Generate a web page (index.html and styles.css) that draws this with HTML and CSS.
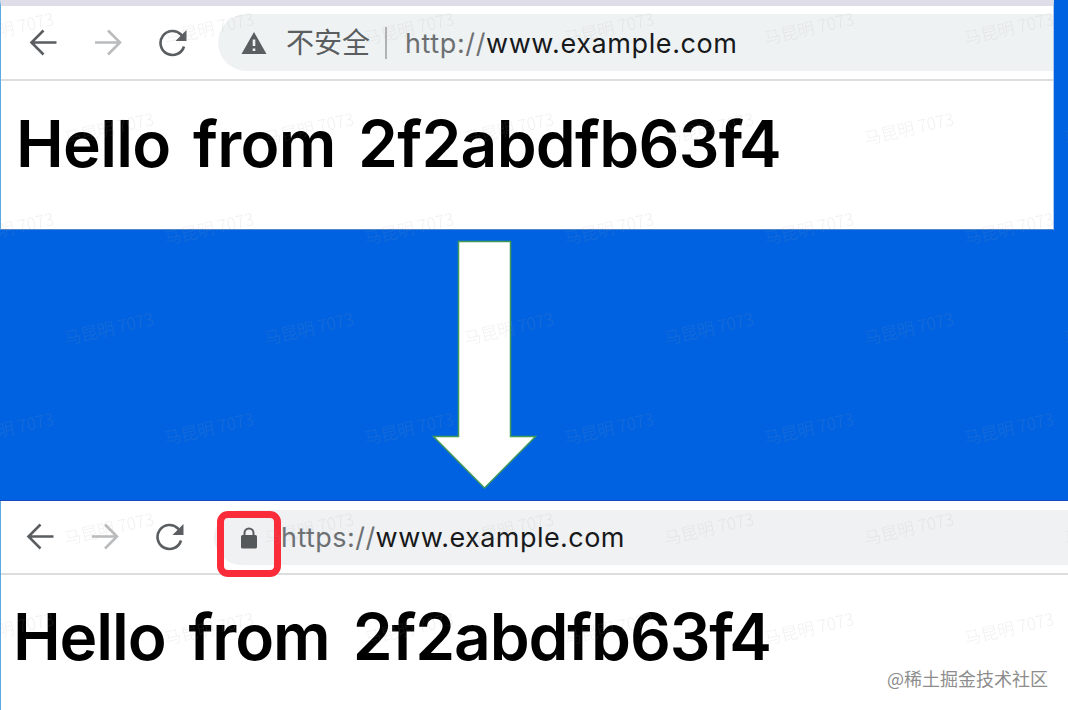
FILE: index.html
```
<!DOCTYPE html>
<html lang="zh">

<head>
    <meta charset="utf-8">
    <title>HTTP to HTTPS</title>
    <link rel="stylesheet" href="styles.css">
</head>

<body>
    <div class="browser browserHttp">
        <div class="toolbar">
            <svg class="icon back" viewBox="0 0 28 28">
                <path d="M27.500 13.500H3M14.500 1.500L2.500 13.500L14.500 25.500" />
            </svg>
            <svg class="icon forward" viewBox="0 0 28 28">
                <path d="M1 13.500H25.500M14 1.500L26 13.500L14 25.500" />
            </svg>
            <svg class="icon reload" viewBox="0 0 28 28">
                <path d="M25 17.500A12 12 0 1 1 22 5.500L24 8" />
                <path class="solid" d="M27.500 1V12H16.500Z" />
            </svg>
            <div class="address">
                <svg class="warning" viewBox="0 0 26 22">
                    <path fill="#5a5e60" d="M13 0L25.500 22H.5Z" />
                    <path stroke="#eff2f3" stroke-width="2.600" d="M13 7.500V14M13 16.500V19" />
                </svg>
                <span class="insecure">不安全</span>
                <span class="divider"></span>
                <span class="url"><span class="scheme">http://</span>www.example.com</span>
            </div>
        </div>
        <h1>Hello from 2f2abdfb63f4</h1>
    </div>

    <div class="gap">
        <svg class="arrow" width="106" height="252" viewBox="0 0 106 252">
            <path d="M27.500 1.500H79.500V196.500H104.500L53.500 248L2.500 196.500H27.500Z" />
        </svg>
    </div>

    <div class="browser browserHttps">
        <div class="toolbar">
            <svg class="icon back" viewBox="0 0 28 28">
                <path d="M27.500 13.500H3M14.500 1.500L2.500 13.500L14.500 25.500" />
            </svg>
            <svg class="icon forward" viewBox="0 0 28 28">
                <path d="M1 13.500H25.500M14 1.500L26 13.500L14 25.500" />
            </svg>
            <svg class="icon reload" viewBox="0 0 28 28">
                <path d="M25 17.500A12 12 0 1 1 22 5.500L24 8" />
                <path class="solid" d="M27.500 1V12H16.500Z" />
            </svg>
            <div class="address">
                <div class="lockBox">
                    <svg width="18" height="22" viewBox="0 0 18 22">
                        <path fill="none" stroke="#5a5e60" stroke-width="2" d="M4.500 9V6A4.500 4.500 0 0 1 13.500 6V9" />
                        <rect fill="#54585b" x="1" y="8" width="16" height="13.500" rx="1.500" />
                    </svg>
                </div>
                <span class="url"><span class="scheme">https://</span>www.example.com</span>
            </div>
        </div>
        <h1>Hello from 2f2abdfb63f4</h1>
        <div class="credit">@稀土掘金技术社区</div>
    </div>

    <!-- repeated watermark over the whole page -->
    <svg class="watermark" width="1068" height="710">
        <defs>
            <pattern id="mark" x="-140" y="-20" width="200" height="200" patternUnits="userSpaceOnUse">
                <text transform="translate(149 49) rotate(-13)" y="6">马昆明 7073</text>
                <text transform="translate(49 149) rotate(-13)" y="6">马昆明 7073</text>
            </pattern>
        </defs>
        <rect width="1068" height="710" fill="url(#mark)" />
    </svg>
</body>

</html>
```

FILE: styles.css
```
* {
    box-sizing: border-box;
}

body {
    margin: 0;
    width: 1068px;
    height: 710px;
    overflow: hidden;
    position: relative;
    background-color: #0062e1;
    font-family: Inter, "Noto Sans CJK SC", sans-serif;
}

.browser {
    background-color: white;
    border-left: 1px solid #5aa9e0;
}

.browserHttp {
    width: 1054px;
    height: 230px;
    border-top: 6px solid #dedde8;
    border-right: 1px solid #a9c8f0;
    border-bottom: 1px solid #4f86cc;
}

.browserHttps {
    height: 209px;
}

.toolbar {
    display: flex;
    align-items: center;
    height: 75px;
    padding-left: 28px;
    border-bottom: 2px solid #dcdddd;
}

.browserHttps .toolbar {
    height: 74px;
    padding-left: 25px;
}

.icon {
    width: 28px;
    height: 28px;
    margin-right: 37px;
    flex: none;
    fill: none;
    stroke: #5a5e60;
    stroke-width: 2.6;
}

.forward {
    stroke: #b9bbbc;
}

.reload {
    margin-right: 31px;
}

.browserHttps .reload {
    margin-right: 30px;
}

.reload .solid {
    fill: #5a5e60;
    stroke: none;
}

.address {
    flex: 1;
    display: flex;
    align-items: center;
    height: 57px;
    padding-left: 23px;
    background-color: #eff2f3;
    border-radius: 29px 0 0 29px;
}

.browserHttps .address {
    height: 55px;
    padding-left: 3px;
    background-color: #f0f1f3;
}

.warning {
    width: 26px;
    height: 22px;
    margin-right: 19px;
}

.insecure {
    font-family: "Noto Sans CJK SC", sans-serif;
    font-size: 28px;
    line-height: 40px;
    margin-top: -3px;
    color: #5a5e60;
}

.divider {
    width: 2px;
    height: 32px;
    margin: 0 18px 0 15px;
    background-color: #b0b3b4;
}

.url {
    margin-top: 2px;
    font-size: 27px;
    line-height: 40px;
    letter-spacing: 0.6px;
    white-space: nowrap;
    color: #17191b;
}

.browserHttps .url {
    letter-spacing: 0.45px;
}

.scheme {
    color: #6d7072;
}

/* red highlight, hangs a little below the address bar */
.lockBox {
    display: flex;
    justify-content: center;
    align-self: flex-start;
    width: 64px;
    height: 66px;
    margin-top: 1px;
    padding-top: 9px;
    flex: none;
    border: 7px solid #fb2c3a;
    border-radius: 11px;
}

h1 {
    margin: 23px 0 0 15px;
    font-size: 64px;
    line-height: 80px;
    font-weight: 600;
    letter-spacing: -0.7px;
    word-spacing: 7px;
    white-space: nowrap;
    color: black;
}

.browserHttps h1 {
    margin: 22px 0 0 12px;
    letter-spacing: -1.1px;
    word-spacing: 8px;
}

.gap {
    height: 271px;
    padding: 10px 0 0 431px;
    border-bottom: 1px solid #1748bd;
}

.arrow {
    display: block;
}

.arrow path {
    fill: white;
    stroke: #429a58;
    stroke-width: 1.5;
}

.credit {
    padding-right: 20px;
    margin-top: -13px;
    text-align: right;
    font-family: "Noto Sans CJK SC", sans-serif;
    font-size: 18px;
    line-height: 28px;
    color: #8d8d8d;
}

.watermark {
    position: absolute;
    left: 0;
    top: 0;
    pointer-events: none;
}

.watermark text {
    font-family: "Noto Sans CJK SC", sans-serif;
    font-size: 17px;
    font-weight: 300;
    text-anchor: middle;
    fill: #999;
    fill-opacity: 0.15;
}
```
